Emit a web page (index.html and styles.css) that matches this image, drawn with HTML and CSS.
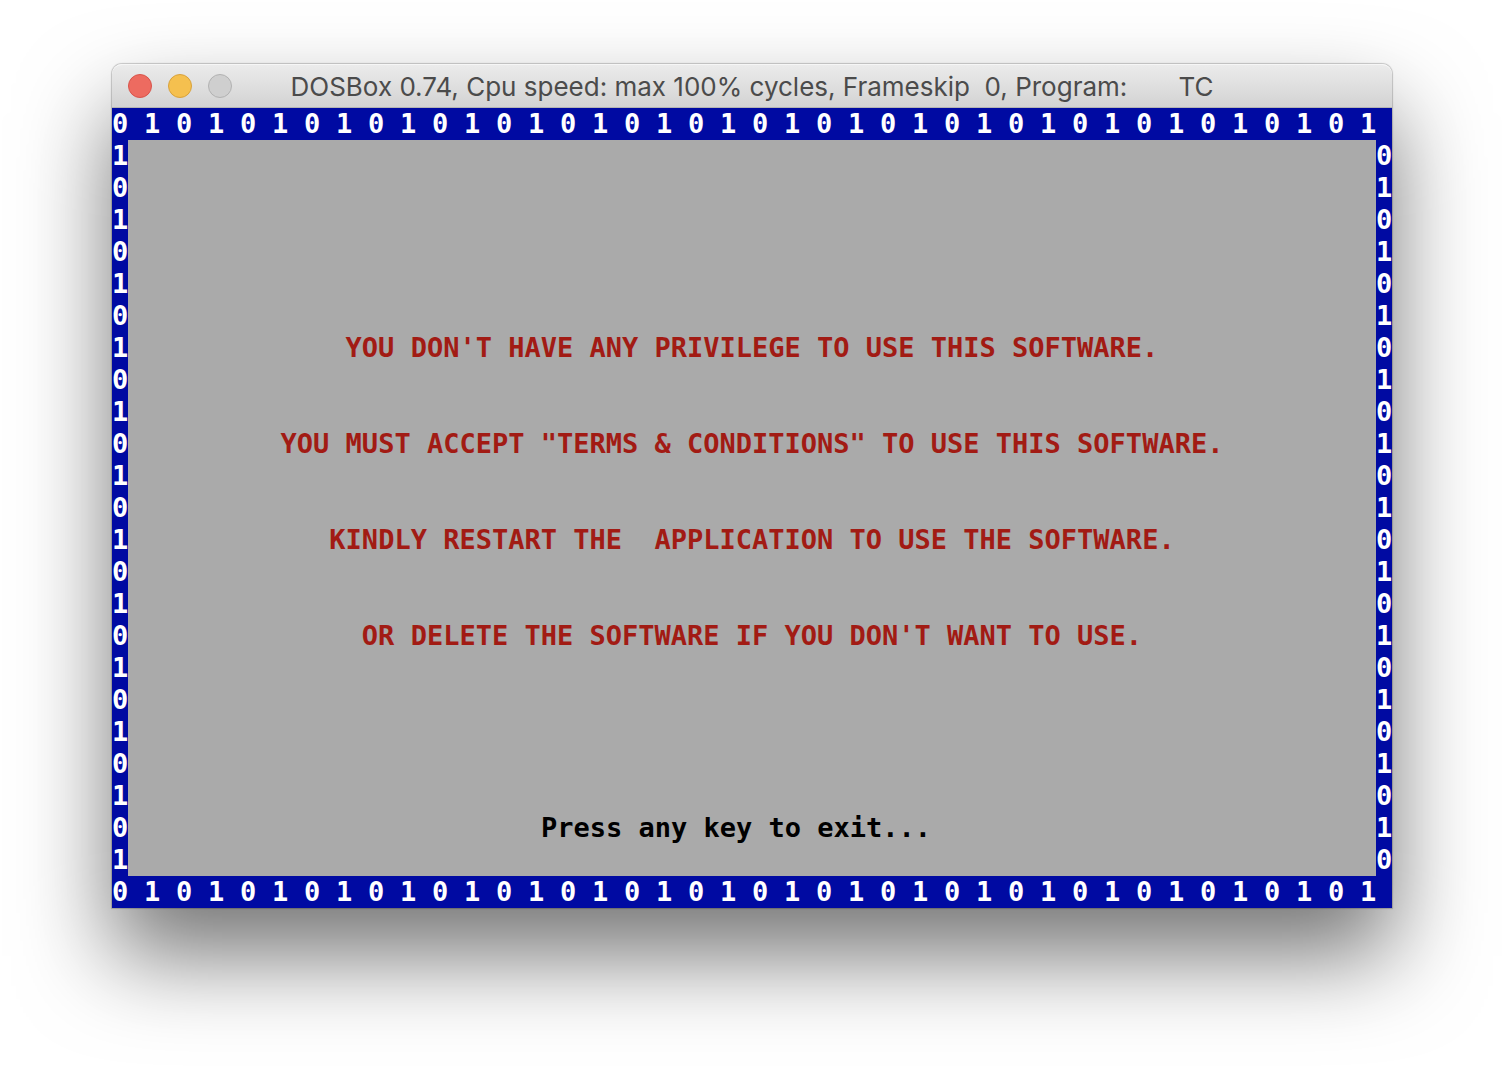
FILE: index.html
```html
<!DOCTYPE html>
<html lang="en">
<head>
<meta charset="utf-8">
<title>DOSBox</title>
<link rel="stylesheet" href="styles.css">
</head>
<body>
<main class="window">
  <header class="titlebar">
    <div class="controls">
      <button class="control close" type="button" aria-label="Close"></button>
      <button class="control minimize" type="button" aria-label="Minimize"></button>
      <button class="control zoom" type="button" aria-label="Zoom" disabled></button>
    </div>
    <h1 class="title">DOSBox 0.74, Cpu speed: max 100% cycles, Frameskip  0, Program:       TC</h1>
  </header>
  <div class="screen">
    <div class="row"><span>0</span><span>1</span><span>0</span><span>1</span><span>0</span><span>1</span><span>0</span><span>1</span><span>0</span><span>1</span><span>0</span><span>1</span><span>0</span><span>1</span><span>0</span><span>1</span><span>0</span><span>1</span><span>0</span><span>1</span><span>0</span><span>1</span><span>0</span><span>1</span><span>0</span><span>1</span><span>0</span><span>1</span><span>0</span><span>1</span><span>0</span><span>1</span><span>0</span><span>1</span><span>0</span><span>1</span><span>0</span><span>1</span><span>0</span><span>1</span></div>
    <div class="middle">
      <div class="side">1
0
1
0
1
0
1
0
1
0
1
0
1
0
1
0
1
0
1
0
1
0
1</div>
      <section class="panel">
        <p class="notice">YOU DON'T HAVE ANY PRIVILEGE TO USE THIS SOFTWARE.</p>
        <p class="notice">YOU MUST ACCEPT "TERMS &amp; CONDITIONS" TO USE THIS SOFTWARE.</p>
        <p class="notice">KINDLY RESTART THE  APPLICATION TO USE THE SOFTWARE.</p>
        <p class="notice">OR DELETE THE SOFTWARE IF YOU DON'T WANT TO USE.</p>
        <p class="prompt">Press any key to exit...</p>
      </section>
      <div class="side">0
1
0
1
0
1
0
1
0
1
0
1
0
1
0
1
0
1
0
1
0
1
0</div>
    </div>
    <div class="row"><span>0</span><span>1</span><span>0</span><span>1</span><span>0</span><span>1</span><span>0</span><span>1</span><span>0</span><span>1</span><span>0</span><span>1</span><span>0</span><span>1</span><span>0</span><span>1</span><span>0</span><span>1</span><span>0</span><span>1</span><span>0</span><span>1</span><span>0</span><span>1</span><span>0</span><span>1</span><span>0</span><span>1</span><span>0</span><span>1</span><span>0</span><span>1</span><span>0</span><span>1</span><span>0</span><span>1</span><span>0</span><span>1</span><span>0</span><span>1</span></div>
  </div>
</main>
</body>
</html>
```
FILE: styles.css
```css
* {
  box-sizing: border-box;
}

body {
  margin: 0;
  padding: 64px 112px 160px;
  background: #fff;
}

.window {
  border-radius: 10px 10px 0 0;
  box-shadow: 0 0 1px 1px rgba(0, 0, 0, 0.2), 0 48px 92px rgba(0, 0, 0, 0.54);
}

.titlebar {
  display: grid;
  grid-template-columns: 120px 1fr 120px;
  align-items: center;
  height: 44px;
  padding: 0 16px;
  border-radius: 10px 10px 0 0;
  border-top: 1px solid #f6f6f6;
  border-bottom: 1px solid #b4b4b4;
  background: linear-gradient(#ebebeb, #d3d3d3);
}

.controls {
  display: flex;
  gap: 16px;
}

.control {
  width: 24px;
  height: 24px;
  padding: 0;
  border: 1px solid;
  border-radius: 50%;
}

.close {
  background: #ed6b60;
  border-color: #d8544b;
}

.minimize {
  background: #f5c04f;
  border-color: #d8a23c;
}

.zoom {
  background: #cfcfcf;
  border-color: #b2b2b2;
}

.title {
  display: flex;
  justify-content: center;
  margin: 0;
  padding-top: 2px;
  font: 400 26px/32px Inter, "Liberation Sans", sans-serif;
  color: #4b4b4b;
  white-space: pre;
}

.screen {
  background: #000aa2;
  color: #fff;
  font: 700 27px/32px "DejaVu Sans Mono", "Liberation Mono", monospace;
}

.row {
  display: grid;
  grid-template-columns: repeat(40, minmax(0, 1fr));
}

.row span {
  display: flex;
  justify-content: center;
  padding-right: 16px;
}

.middle {
  display: grid;
  grid-template-columns: 16px 1fr 16px;
}

.side {
  white-space: pre;
}

.panel {
  display: flex;
  flex-direction: column;
  align-items: center;
  gap: 64px;
  padding: 192px 0 32px;
  background: #aaa;
}

.notice,
.prompt {
  margin: 0;
  white-space: pre;
}

.notice {
  color: #a21b14;
}

.prompt {
  margin-top: 96px;
  padding-right: 32px;
  color: #000;
}
```
